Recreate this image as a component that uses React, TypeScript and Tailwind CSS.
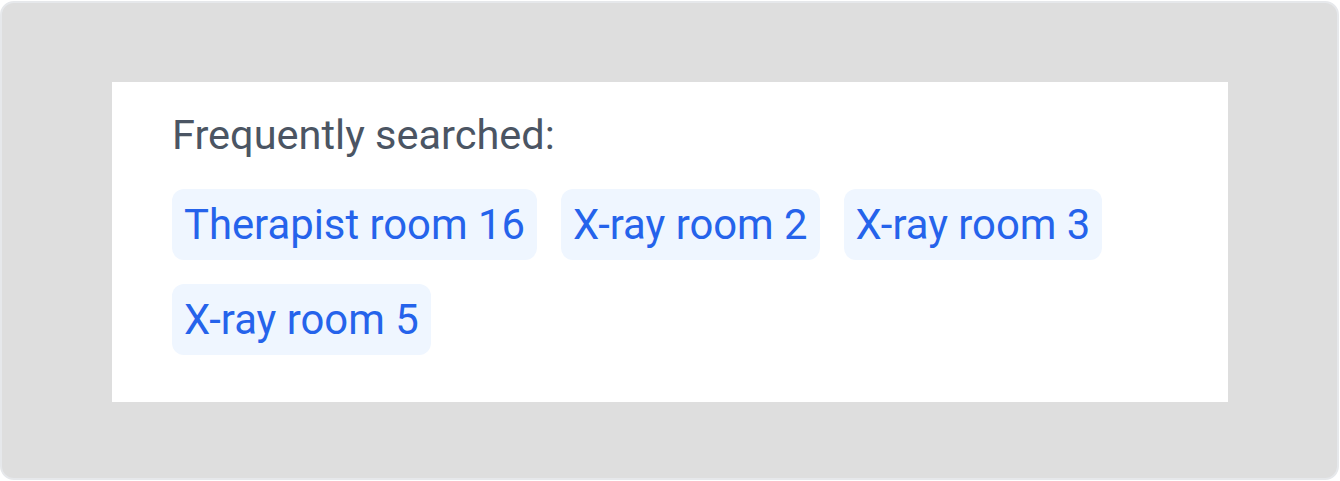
import React from 'react';

const FREQUENT = ['Therapist room 16', 'X-ray room 2', 'X-ray room 3', 'X-ray room 5'];

export default function App() {
  return (
    <div className="w-[1340px] h-[481px] bg-white pt-[1px]" style={{ fontFamily: 'Roboto, "Liberation Sans", sans-serif' }}>
      {/* Outer frame */}
      <div className="w-[1339px] h-[479px] rounded-[14px] border-2 border-[#e6e8eb] bg-[#dedede] pl-[110px] pt-[79px]">
        {/* Panel */}
        <div className="w-[1116px] h-[320px] bg-white px-[60px] pt-[23px]">
          <p className="text-[41.5px] leading-[60px] text-[#4b5563] mb-[24px]">Frequently searched:</p>
          <div className="flex flex-wrap gap-[24px]">
            {FREQUENT.map((name) => (
              <button
                key={name}
                className="h-[71px] flex items-center px-[12px] rounded-[12px] bg-[#eff6ff] text-[#2563eb] text-[41.8px] leading-[60px]"
              >
                {name}
              </button>
            ))}
          </div>
        </div>
      </div>
    </div>
  );
}
